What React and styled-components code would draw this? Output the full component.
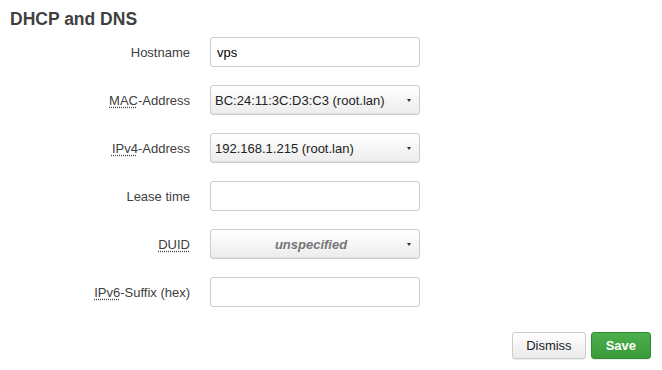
import styled, { createGlobalStyle } from "styled-components"

const GlobalStyle = createGlobalStyle`
    body {
        margin: 0;
        background: #fff;
        font-family: "Liberation Sans", Arial, sans-serif;
        color: #404040;
    }
`

const fields = [
    { label: "Hostname", kind: "input", value: "vps" },
    { label: "MAC-Address", abbr: "MAC", kind: "select", value: "BC:24:11:3C:D3:C3 (root.lan)" },
    { label: "IPv4-Address", abbr: "IPv4", kind: "select", value: "192.168.1.215 (root.lan)" },
    { label: "Lease time", kind: "input", value: "" },
    { label: "DUID", abbr: "DUID", kind: "select", value: "unspecified", placeholder: true },
    { label: "IPv6-Suffix (hex)", abbr: "IPv6", kind: "input", value: "" },
]

const Label = ({ label, abbr }) => {
    if (!abbr) return <LabelText>{label}</LabelText>
    return (
        <LabelText>
            <Abbr>{abbr}</Abbr>{label.slice(abbr.length)}
        </LabelText>
    )
}

const App = () => {
    return (
        <>
            <GlobalStyle />
            <Page>
                <Title>DHCP and DNS</Title>
                <Form>
                    {fields.map((f) => (
                        <Row key={f.label}>
                            <Label label={f.label} abbr={f.abbr} />
                            {f.kind === "input" ? (
                                <TextInput type="text" defaultValue={f.value} />
                            ) : (
                                <Select>
                                    <SelectValue placeholder={f.placeholder}>{f.value}</SelectValue>
                                    <Caret />
                                </Select>
                            )}
                        </Row>
                    ))}
                </Form>
                <Actions>
                    <Button>Dismiss</Button>
                    <Button primary>Save</Button>
                </Actions>
            </Page>
        </>
    )
}

export default App

// styles

const Page = styled.div`
    width: 662px;
    height: 370px;
    box-sizing: border-box;
    padding: 9px 11px 0 10px;
`

const Title = styled.h3`
    margin: 0;
    font-size: 17.5px;
    font-weight: bold;
    line-height: 20px;
    color: #404040;
`

const Form = styled.div`
    display: flex;
    flex-direction: column;
    gap: 18px;
    margin-top: 8px;
`

const Row = styled.div`
    display: grid;
    grid-template-columns: 180px 210px;
    column-gap: 20px;
    align-items: center;
    height: 30px;
`

const LabelText = styled.div`
    text-align: right;
    font-size: 13px;
    color: #404040;
`

const Abbr = styled.span`
    text-decoration: underline dotted;
    text-underline-offset: 2px;
`

const TextInput = styled.input`
    box-sizing: border-box;
    width: 210px;
    height: 30px;
    padding: 0 6px;
    border: 1px solid #ccc;
    border-radius: 3px;
    font-family: "Liberation Sans", Arial, sans-serif;
    font-size: 13px;
    color: #000;
    background: #fff;
    outline: none;
`

const Select = styled.div`
    box-sizing: border-box;
    width: 210px;
    height: 30px;
    display: flex;
    align-items: center;
    padding: 0 8px 0 4px;
    border: 1px solid #ccc;
    border-radius: 3px;
    background: linear-gradient(#fff, #ececec);
    box-shadow: inset 0 -1px 0 rgba(0, 0, 0, 0.04);
`

const SelectValue = styled.span`
    flex: 1;
    font-size: 13px;
    color: ${(p) => (p.placeholder ? "#777" : "#222")};
    font-style: ${(p) => (p.placeholder ? "italic" : "normal")};
    font-weight: ${(p) => (p.placeholder ? "bold" : "normal")};
    text-align: ${(p) => (p.placeholder ? "center" : "left")};
`

const Caret = styled.span`
    width: 0;
    height: 0;
    border-left: 2.5px solid transparent;
    border-right: 2.5px solid transparent;
    border-top: 3px solid #333;
`

const Actions = styled.div`
    display: flex;
    justify-content: flex-end;
    gap: 5px;
    margin-top: 25px;
`

const Button = styled.button`
    box-sizing: border-box;
    height: 27px;
    padding: 0 ${(p) => (p.primary ? "14px" : "13px")};
    border: 1px solid ${(p) => (p.primary ? "#2e8b2e" : "#ccc")};
    border-radius: 3px;
    font-family: "Liberation Sans", Arial, sans-serif;
    font-size: 13px;
    font-weight: ${(p) => (p.primary ? "bold" : "normal")};
    color: ${(p) => (p.primary ? "#fff" : "#222")};
    background: ${(p) => (p.primary ? "linear-gradient(#4cae4c, #3a9a3a)" : "linear-gradient(#fff, #eaeaea)")};
    box-shadow: 0 1px 1px rgba(0, 0, 0, 0.08);
`
